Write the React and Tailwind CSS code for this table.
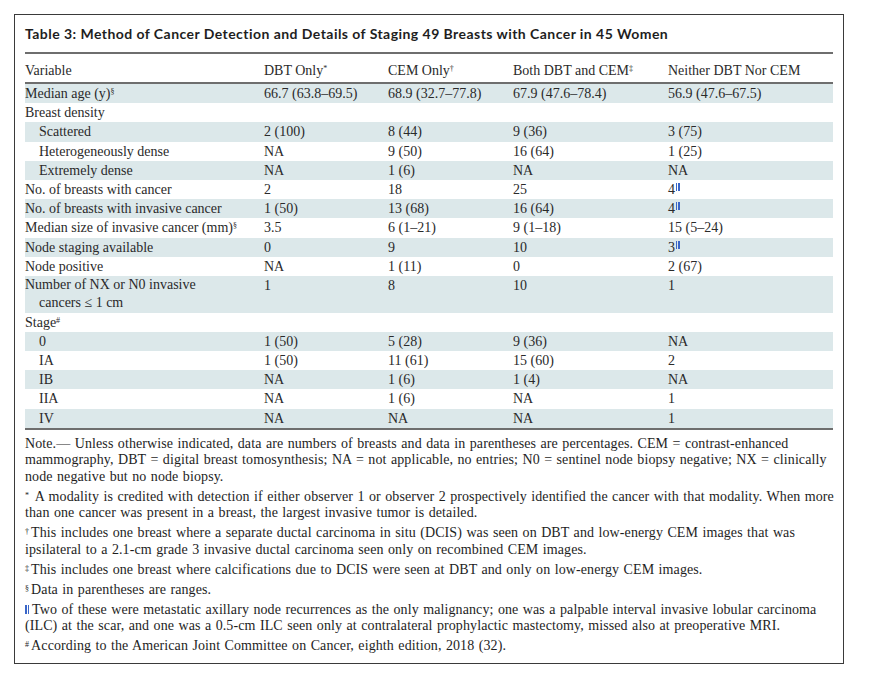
import React from 'react';

const serif = { fontFamily: '"Liberation Serif", "Times New Roman", serif' };

// blue double bar used as a footnote mark
const Bars = () => (
  <span className="inline-flex gap-[1px] align-top mt-[3px] ml-[1px]">
    <span className="w-[1.3px] h-[8px] bg-[#3a66c8]" />
    <span className="w-[1.3px] h-[8px] bg-[#3a66c8]" />
  </span>
);

const rows = [
  { label: <>Median age (y)<sup className="text-[8px]">§</sup></>, cells: ['66.7 (63.8–69.5)', '68.9 (32.7–77.8)', '67.9 (47.6–78.4)', '56.9 (47.6–67.5)'] },
  { label: 'Breast density', cells: ['', '', '', ''] },
  { label: 'Scattered', indent: true, cells: ['2 (100)', '8 (44)', '9 (36)', '3 (75)'] },
  { label: 'Heterogeneously dense', indent: true, cells: ['NA', '9 (50)', '16 (64)', '1 (25)'] },
  { label: 'Extremely dense', indent: true, cells: ['NA', '1 (6)', 'NA', 'NA'] },
  { label: 'No. of breasts with cancer', cells: ['2', '18', '25', <>4<Bars /></>] },
  { label: 'No. of breasts with invasive cancer', cells: ['1 (50)', '13 (68)', '16 (64)', <>4<Bars /></>] },
  { label: <>Median size of invasive cancer (mm)<sup className="text-[8px]">§</sup></>, cells: ['3.5', '6 (1–21)', '9 (1–18)', '15 (5–24)'] },
  { label: 'Node staging available', cells: ['0', '9', '10', <>3<Bars /></>] },
  { label: 'Node positive', cells: ['NA', '1 (11)', '0', '2 (67)'] },
  { label: 'nx', cells: ['1', '8', '10', '1'] },
  { label: <>Stage<sup className="text-[8px]">#</sup></>, cells: ['', '', '', ''] },
  { label: '0', indent: true, cells: ['1 (50)', '5 (28)', '9 (36)', 'NA'] },
  { label: 'IA', indent: true, cells: ['1 (50)', '11 (61)', '15 (60)', '2'] },
  { label: 'IB', indent: true, cells: ['NA', '1 (6)', '1 (4)', 'NA'] },
  { label: 'IIA', indent: true, cells: ['NA', '1 (6)', 'NA', '1'] },
  { label: 'IV', indent: true, cells: ['NA', 'NA', 'NA', '1'] },
];

const Mark = ({ children }) => (
  <span className="inline-block align-top text-[8px] leading-[9px] mt-[2px] mr-[2px]">{children}</span>
);

export default function App() {
  return (
    <div className="w-[874px] h-[691px] bg-white pt-[14px] pl-[14px]" style={serif}>
      <div className="w-[830px] h-[650px] border-[1.5px] border-[#3a3a3a] px-[10px] text-[#222]">
        <div
          className="h-[37px] flex items-center font-bold text-[14px] tracking-[0.45px] text-[#1e1e1e]"
          style={{ fontFamily: 'Lato, "Noto Sans", sans-serif' }}
        >
          Table 3: Method of Cancer Detection and Details of Staging 49 Breasts with Cancer in 45 Women
        </div>

        <table className="w-[808px] table-fixed border-collapse text-[14px] text-[#2a2a2a]">
          <colgroup>
            <col className="w-[239px]" />
            <col className="w-[124px]" />
            <col className="w-[125px]" />
            <col className="w-[155px]" />
            <col className="w-[165px]" />
          </colgroup>
          <thead>
            <tr className="border-t-2 border-b-2 border-[#6e6e6e] h-[30px]">
              <th className="text-left font-normal pt-[4px]">Variable</th>
              <th className="text-left font-normal pt-[4px]">DBT Only<sup className="text-[8px]">*</sup></th>
              <th className="text-left font-normal pt-[4px]">CEM Only<sup className="text-[8px]">†</sup></th>
              <th className="text-left font-normal pt-[4px]">Both DBT and CEM<sup className="text-[8px]">‡</sup></th>
              <th className="text-left font-normal pt-[4px]">Neither DBT Nor CEM</th>
            </tr>
          </thead>
          <tbody className="border-b-2 border-[#6e6e6e]">
            {rows.map((r, i) => (
              <tr key={i} className={i % 2 === 0 ? 'bg-[#dce8ea]' : 'bg-white'}>
                {r.label === 'nx' ? (
                  <td className="align-top leading-[18.3px] py-0">
                    <div>Number of NX or N0 invasive</div>
                    <div className="pl-[14px]">cancers ≤ 1 cm</div>
                  </td>
                ) : (
                  <td className={`leading-[19.2px] whitespace-nowrap ${r.indent ? 'pl-[14px]' : ''}`}>{r.label}</td>
                )}
                {r.cells.map((c, j) => (
                  <td key={j} className="align-top leading-[19.2px] whitespace-nowrap">{c}</td>
                ))}
              </tr>
            ))}
          </tbody>
        </table>

        <div
          className="w-[815px] pt-[6px] text-[14px] leading-[16.5px] tracking-[0.1px] text-[#1e1e1e] flex flex-col gap-[3.5px]"
          style={{ wordSpacing: '0.8px' }}
        >
          <p>
            Note.— Unless otherwise indicated, data are numbers of breasts and data in parentheses are percentages. CEM = contrast-enhanced mammography, DBT = digital breast tomosynthesis; NA = not applicable, no entries; N0 = sentinel node biopsy negative; NX = clinically node negative but no node biopsy.
          </p>
          <p>
            <Mark>*</Mark> A modality is credited with detection if either observer 1 or observer 2 prospectively identified the cancer with that modality. When more than one cancer was present in a breast, the largest invasive tumor is detailed.
          </p>
          <p>
            <Mark>†</Mark>This includes one breast where a separate ductal carcinoma in situ (DCIS) was seen on DBT and low-energy CEM images that was ipsilateral to a 2.1-cm grade 3 invasive ductal carcinoma seen only on recombined CEM images.
          </p>
          <p>
            <Mark>‡</Mark>This includes one breast where calcifications due to DCIS were seen at DBT and only on low-energy CEM images.
          </p>
          <p>
            <Mark>§</Mark>Data in parentheses are ranges.
          </p>
          <p>
            <span className="inline-flex gap-[1px] align-top mt-[3px] mr-[3px]">
              <span className="w-[1.5px] h-[9px] bg-[#3a66c8]" />
              <span className="w-[1.5px] h-[9px] bg-[#3a66c8]" />
            </span>
            Two of these were metastatic axillary node recurrences as the only malignancy; one was a palpable interval invasive lobular carcinoma (ILC) at the scar, and one was a 0.5-cm ILC seen only at contralateral prophylactic mastectomy, missed also at preoperative MRI.
          </p>
          <p>
            <Mark>#</Mark>According to the American Joint Committee on Cancer, eighth edition, 2018 (32).
          </p>
        </div>
      </div>
    </div>
  );
}
